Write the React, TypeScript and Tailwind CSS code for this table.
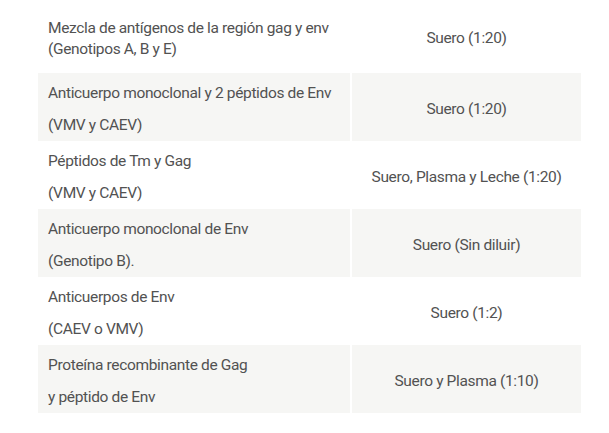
import React from "react";

type Row = { left: string[]; right: string; shaded: boolean; tight?: boolean };

const rows: Row[] = [
  { left: ["Mezcla de antígenos de la región gag y env", "(Genotipos A, B y E)"], right: "Suero (1:20)", shaded: false, tight: true },
  { left: ["Anticuerpo monoclonal y 2 péptidos de Env", "(VMV y CAEV)"], right: "Suero (1:20)", shaded: true },
  { left: ["Péptidos de Tm y Gag", "(VMV y CAEV)"], right: "Suero, Plasma y Leche (1:20)", shaded: false },
  { left: ["Anticuerpo monoclonal de Env", "(Genotipo B)."], right: "Suero (Sin diluir)", shaded: true },
  { left: ["Anticuerpos de Env", "(CAEV o VMV)"], right: "Suero (1:2)", shaded: false },
  { left: ["Proteína recombinante de Gag", "y péptido de Env"], right: "Suero y Plasma (1:10)", shaded: true },
  { left: ["Virus completo", ""], right: "Suero y Plasma (1:20)", shaded: false },
];

export default function App() {
  return (
    <div
      className="w-[609px] h-[433px] overflow-hidden bg-white pt-[5px] pl-[38px] text-[#525252] text-[15.5px] tracking-[-0.35px]"
      style={{ fontFamily: "Roboto, 'Liberation Sans', sans-serif" }}
    >
      <div className="grid grid-cols-[312px_229px] gap-x-[2px]">
        {rows.map((r, i) => (
          <React.Fragment key={i}>
            <div
              className={`h-[68px] pl-[10px] flex flex-col justify-center ${r.shaded ? "bg-[#f6f6f4]" : "bg-white"} ${r.tight ? "leading-[21px]" : "leading-[32px] pt-[4px]"}`}
            >
              {r.left.map((l, j) => (
                <div key={j}>{l}</div>
              ))}
            </div>
            <div
              className={`h-[68px] flex items-center justify-center ${r.shaded ? "bg-[#f6f6f4]" : "bg-white"} ${r.tight ? "" : "pt-[5px]"}`}
            >
              {r.right}
            </div>
          </React.Fragment>
        ))}
      </div>
    </div>
  );
}
